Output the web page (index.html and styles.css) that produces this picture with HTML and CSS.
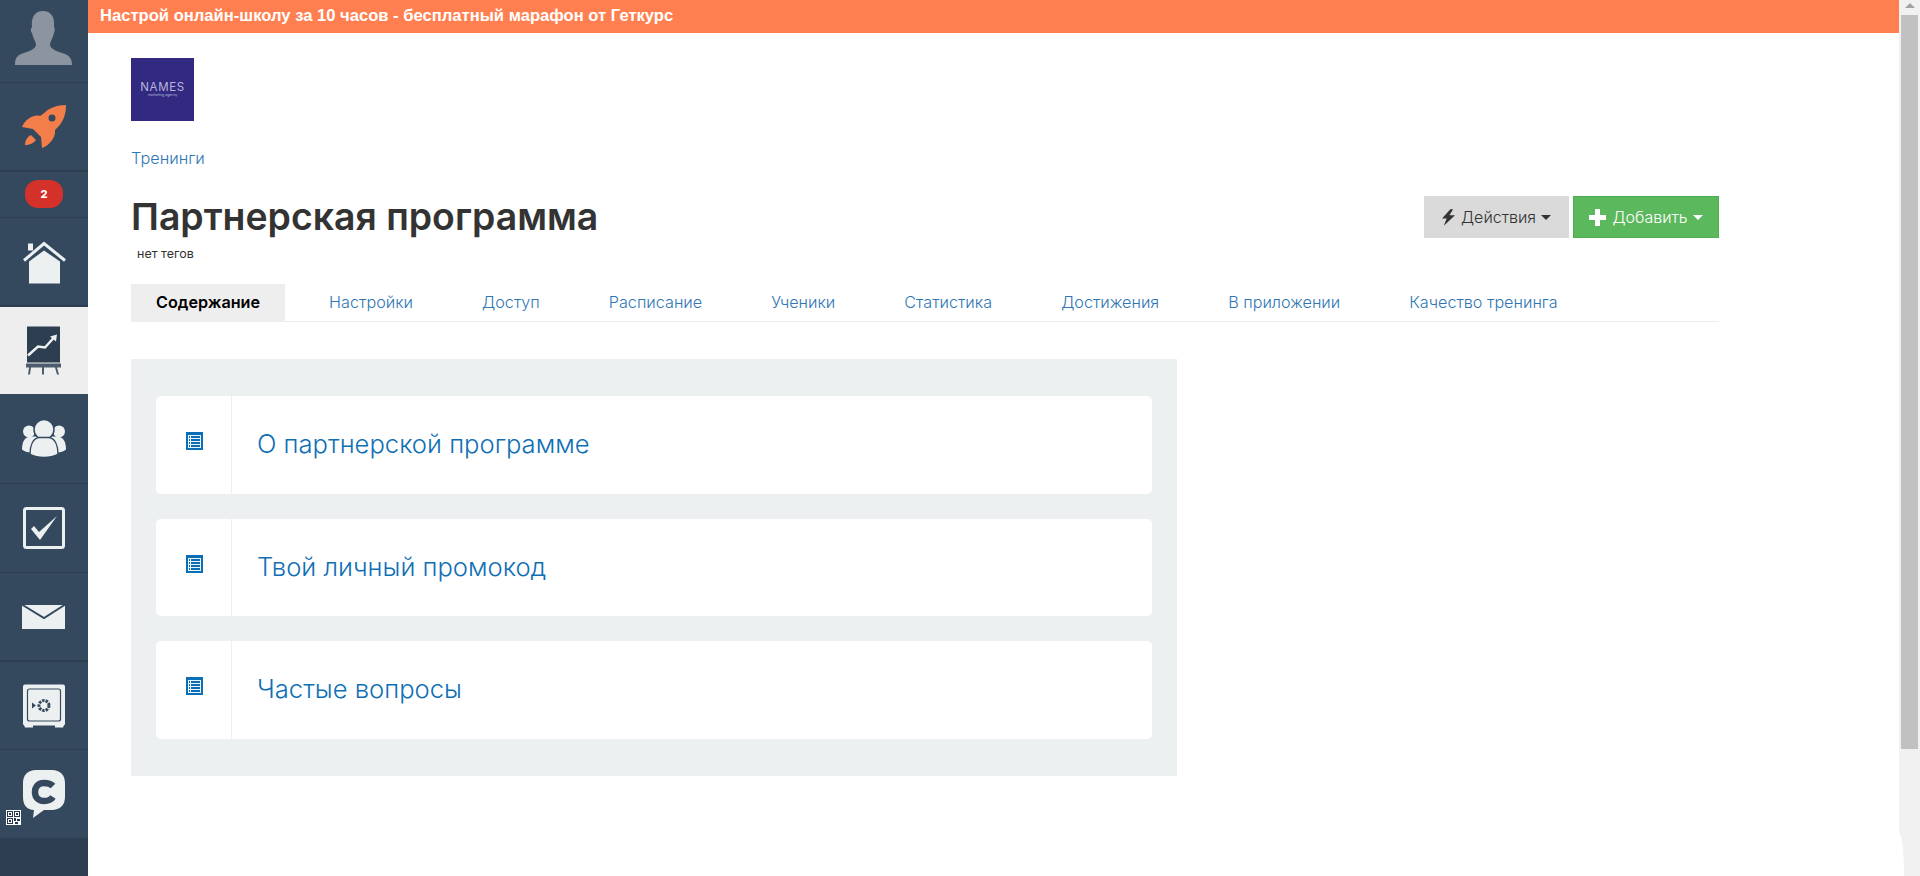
FILE: index.html
```html
<!DOCTYPE html>
<html lang="ru">
<head>
  <meta charset="UTF-8">
  <title>Партнерская программа</title>
  <link rel="stylesheet" href="styles.css">
</head>
<body>

  <!-- Левое меню -->
  <nav class="sidebar">
    <a class="side-item h-avatar">
      <svg class="side-icon" viewBox="14 11 60 60"><path class="avatar" d="M15 65C15 58 17 55 24 53C30 51 35 49 36 45C36 42 33 38 32 33C30 31 31 28 32 27C31 17 35 11 43 11C51 11 55 17 54 27C55 28 55 31 54 33C53 38 50 42 50 45C51 49 56 51 62 53C69 55 72 58 72 65Z"/></svg>
    </a>
    <a class="side-item h-rocket">
      <svg class="side-icon" viewBox="14 97 60 60">
        <path class="rocket" d="M66 105C66 115 63 122 57 128L55 130C56 137 50 145 42 148L41 137L33 129L22 127C25 120 33 114 40 116L43 114C49 108 57 105 66 105Z"/>
        <path class="rocket" d="M31 135L36 140C34 143 29 145 25 145C25 141 27 137 31 135Z"/>
        <circle class="dark" cx="52" cy="118" r="3.5"/>
      </svg>
    </a>
    <a class="side-item h-badge"><span class="badge">2</span></a>
    <a class="side-item h-home">
      <svg class="side-icon" viewBox="14 231.5 60 60">
        <path class="light" d="M28 243H33V250H28Z"/>
        <path class="light" d="M29 261L44 250L60 261V283H29Z"/>
        <path class="line" d="M24 260L44 243L65 260"/>
      </svg>
    </a>
    <a class="side-item h-active active">
      <svg class="side-icon" viewBox="14 320.5 60 60">
        <path class="board" d="M27 326H60V362H27Z"/>
        <path class="stand" d="M26 363H61V367H26ZM29 367H31L30 374H28ZM42 367H44V374H42ZM55 367H57L59 374H57Z"/>
        <path class="trend" d="M28 355L38 346L45 347L54 337"/>
        <path class="light" d="M50 336L57 334L56 341Z"/>
      </svg>
    </a>
    <a class="side-item h-users">
      <svg class="side-icon" viewBox="14 408.5 60 60">
        <circle class="light" cx="29" cy="431" r="6"/>
        <circle class="light" cx="59" cy="431" r="6"/>
        <path class="light" d="M22 449C22 441 25 436 31 436H57C63 436 66 441 66 449C64 451 60 452 58 452H30C28 452 24 451 22 449Z"/>
        <circle class="light out" cx="44" cy="429" r="10"/>
        <path class="light out" d="M30 454C30 445 33 438 39 437H49C55 438 58 445 58 454C50 458 38 458 30 454Z"/>
      </svg>
    </a>
    <a class="side-item h-tasks">
      <svg class="side-icon" viewBox="14 498 60 60">
        <rect class="frame" x="24.5" y="508.500" width="39" height="39" rx="2"/>
        <path class="light" d="M31 529L34 526L39 532L57 516L40 540Z"/>
      </svg>
    </a>
    <a class="side-item h-mail">
      <svg class="side-icon" viewBox="14 587 60 60">
        <path class="light" d="M22 605H65V629H22Z"/>
        <path class="fold" d="M21 604L44 618L66 604"/>
      </svg>
    </a>
    <a class="side-item h-safe">
      <svg class="side-icon" viewBox="14 675.500 60 60">
        <rect class="light" x="23" y="684" width="42" height="41" rx="2"/>
        <path class="light" d="M23 722H33V727H25ZM55 722H65L63 727H55Z"/>
        <rect class="thin" x="27.500" y="688.500" width="33" height="32" rx="2"/>
        <circle class="gear" cx="44" cy="705" r="5"/>
        <path class="dark" d="M32 702L36 705L32 708Z"/>
      </svg>
    </a>
    <a class="side-item h-chat">
      <svg class="side-icon" viewBox="14 764 60 60">
        <path class="light" d="M36 770H52C60 770 65 775 65 783V797C65 805 60 810 52 810H44L33 818L34 810C27 810 23 805 23 797V783C23 775 28 770 36 770Z"/>
        <path class="c-mark" d="M53 786C50 783 47 783 44 783C37 783 35 788 35 792C35 797 38 801 44 801C48 801 51 800 53 797"/>
      </svg>
    </a>
    <svg class="qr" viewBox="0 0 15 15">
      <rect width="15" height="15" fill="#fff"/>
      <path d="M1 1H7V7H1ZM8 1H14V7H8ZM1 8H7V14H1Z" fill="#26384d"/>
      <path d="M2 2H6V6H2ZM9 2H13V6H9ZM2 9H6V13H2Z" fill="#fff"/>
      <path d="M3 3H5V5H3ZM10 3H12V5H10ZM3 10H5V12H3ZM8 8H10V11H8ZM11 9H14V11H11ZM9 12H12V14H9Z" fill="#26384d"/>
    </svg>
  </nav>

  <div class="page">
    <div class="promo-bar">Настрой онлайн-школу за 10 часов - бесплатный марафон от Геткурс</div>

    <main class="content">
      <div class="logo">
        <span class="logo-name">NAMES</span>
        <span class="logo-sub">marketing agency</span>
      </div>

      <a class="crumb">Тренинги</a>

      <div class="title-row">
        <h1>Партнерская программа</h1>
        <div class="actions">
          <button class="btn btn-gray">
            <svg class="btn-icon" viewBox="0 0 14 18"><path d="M9 0L0 10H5L2 18L14 6.500H8L12 0Z" fill="#333"/></svg>
            Действия<span class="caret"></span>
          </button>
          <button class="btn btn-green">
            <svg class="btn-icon plus" viewBox="0 0 17 17"><path d="M6 0H11V6H17V11H11V17H6V11H0V6H6Z" fill="#fff"/></svg>
            Добавить<span class="caret"></span>
          </button>
        </div>
      </div>
      <div class="tags">нет тегов</div>

      <div class="tabs">
        <a class="tab active">Содержание</a>
        <a class="tab">Настройки</a>
        <a class="tab">Доступ</a>
        <a class="tab">Расписание</a>
        <a class="tab">Ученики</a>
        <a class="tab">Статистика</a>
        <a class="tab">Достижения</a>
        <a class="tab">В приложении</a>
        <a class="tab">Качество тренинга</a>
      </div>

      <div class="lessons">
        <a class="lesson">
          <span class="lesson-icon"><svg viewBox="0 0 17 18"><use href="#list-icon"/></svg></span>
          <span class="lesson-title">О партнерской программе</span>
        </a>
        <a class="lesson">
          <span class="lesson-icon"><svg viewBox="0 0 17 18"><use href="#list-icon"/></svg></span>
          <span class="lesson-title">Твой личный промокод</span>
        </a>
        <a class="lesson">
          <span class="lesson-icon"><svg viewBox="0 0 17 18"><use href="#list-icon"/></svg></span>
          <span class="lesson-title">Частые вопросы</span>
        </a>
      </div>
    </main>
  </div>

  <!-- Полоса прокрутки -->
  <div class="rail">
    <span class="rail-arrow"></span>
    <div class="rail-thumb"></div>
  </div>

  <svg class="defs">
    <symbol id="list-icon" viewBox="0 0 17 18">
      <rect width="17" height="18" fill="#0b6fb8"/>
      <rect x="2" y="3" width="13" height="13" fill="#eef5fa"/>
      <path d="M5 4H14V6H5ZM5 7H14V9H5ZM5 10H14V12H5ZM5 13H14V15H5ZM3 4H4V6H3ZM3 7H4V9H3ZM3 10H4V12H3ZM3 13H4V15H3Z" fill="#0b6fb8"/>
    </symbol>
  </svg>

</body>
</html>
```

FILE: styles.css
```css
* {
  box-sizing: border-box;
}

html, body {
  height: 100%;
}

body {
  margin: 0;
  display: flex;
  overflow: hidden;
  font-family: "Inter", "Open Sans", sans-serif;
  color: #333;
  background-color: #fff;
}

a {
  color: #2f76b5;
  text-decoration: none;
}

/* sidebar */
.sidebar {
  position: relative;
  flex: 0 0 88px;
  background-color: #2c3e50;
}

.side-item {
  display: flex;
  align-items: center;
  justify-content: center;
  background-color: #34495e;
  border-bottom: 1px solid #2c3e50;
}

.side-icon {
  width: 60px;
  height: 60px;
}

.h-avatar { height: 83px; }
.h-rocket { height: 89px; border-bottom-width: 2px; }
.h-badge { height: 46px; }
.h-home { height: 89px; border-bottom-width: 2px; }
.h-active { height: 87px; }
.h-users { height: 90px; }
.h-tasks { height: 89px; }
.h-mail { height: 89px; border-bottom-width: 2px; }
.h-safe { height: 88px; }
.h-chat { height: 88px; border-bottom: none; }

.side-item.active {
  background-color: #eee;
  border-bottom: none;
}

.avatar { fill: #8b949f; }
.rocket { fill: #f47e4a; }
.dark { fill: #34495e; }
.light { fill: #ecf0f1; }
.out { stroke: #34495e; stroke-width: 1.5; }
.line { fill: none; stroke: #ecf0f1; stroke-width: 3; }
.board { fill: #2c3e50; }
.stand { fill: #4c5c6d; }
.trend { fill: none; stroke: #ecf0f1; stroke-width: 2.5; }
.frame { fill: none; stroke: #ecf0f1; stroke-width: 3; }
.fold { fill: none; stroke: #34495e; stroke-width: 2; }
.thin { fill: none; stroke: #34495e; stroke-width: 1.2; }
.gear { fill: none; stroke: #34495e; stroke-width: 3; stroke-dasharray: 2.500 1; }
.c-mark { fill: none; stroke: #34495e; stroke-width: 6.500; }

.badge {
  width: 38px;
  height: 28px;
  margin-top: -1px;
  border-radius: 13px;
  background-color: #d5312b;
  color: #fff;
  font-size: 11px;
  font-weight: 800;
  line-height: 28px;
  text-align: center;
}

.qr {
  position: absolute;
  left: 6px;
  top: 810px;
  width: 15px;
  height: 15px;
}

/* page */
.page {
  flex: 1;
  min-width: 0;
}

.promo-bar {
  height: 33px;
  padding-left: 12px;
  background-color: #ff7f50;
  color: #fff;
  font-family: "Liberation Sans", sans-serif;
  font-size: 16.6px;
  font-weight: bold;
  line-height: 32px;
}

.content {
  width: 1631px;
  padding: 25px 0 0 43px;
}

.logo {
  display: flex;
  flex-direction: column;
  align-items: center;
  justify-content: center;
  width: 63px;
  height: 63px;
  background-color: #312a80;
  color: #b9b5dc;
}

.logo-name {
  font-size: 11.500px;
  line-height: 12px;
  letter-spacing: 0.6px;
}

.logo-sub {
  font-size: 3.500px;
  line-height: 5px;
}

.crumb {
  display: block;
  margin-top: 27px;
  font-size: 16.300px;
  font-weight: 300;
  line-height: 20px;
}

.title-row {
  display: flex;
  justify-content: space-between;
  margin-top: 28px;
}

h1 {
  margin: 0;
  font-size: 37.400px;
  font-weight: 600;
  line-height: 42px;
  color: #333;
}

.actions {
  display: flex;
  gap: 4px;
}

.btn {
  display: flex;
  align-items: center;
  justify-content: center;
  gap: 6px;
  height: 42px;
  border: 1px solid transparent;
  font-family: inherit;
  font-size: 16px;
  font-weight: 300;
  cursor: pointer;
}

.btn-gray {
  width: 145px;
  background-color: #dadada;
  color: #333;
}

.btn-green {
  width: 146px;
  background-color: #5cb85c;
  border-color: #4cae4c;
  color: #fff;
}

.btn-icon {
  width: 13px;
  height: 17px;
}

.btn-icon.plus {
  width: 17px;
}

.caret {
  width: 0;
  height: 0;
  margin-left: -1px;
  border-top: 5px solid currentColor;
  border-left: 5px solid transparent;
  border-right: 5px solid transparent;
}

.tags {
  margin-top: 8px;
  padding-left: 6px;
  font-size: 12.500px;
  line-height: 16px;
}

.tabs {
  display: flex;
  gap: 19px;
  margin-top: 22px;
  border-bottom: 1px solid #eee;
}

.tab {
  padding: 0 25px;
  font-size: 16.200px;
  font-weight: 300;
  line-height: 37px;
}

.tab.active {
  background-color: #eee;
  color: #000;
  font-weight: 600;
  font-size: 16.200px;
}

.lessons {
  display: flex;
  flex-direction: column;
  gap: 25px;
  width: 1046px;
  margin-top: 37px;
  padding: 37px 25px;
  background-color: #ecf0f1;
}

.lesson {
  display: flex;
  height: 97.500px;
  border-radius: 5px;
  background-color: #fff;
}

.lesson-icon {
  flex: 0 0 76px;
  padding: 36px 0 0 30px;
  border-right: 1px solid #ecf0f1;
}

.lesson-icon svg {
  display: block;
  width: 17px;
  height: 18px;
}

.lesson-title {
  padding-left: 25px;
  color: #0f6fb5;
  font-size: 25.600px;
  font-weight: 300;
  line-height: 96px;
}

/* scrollbar */
.rail {
  position: relative;
  flex: 0 0 21px;
  padding: 0 2px;
  background-color: #f1f1f1;
}

.rail::after {
  content: "";
  position: absolute;
  left: 0;
  bottom: 0;
  width: 5px;
  height: 43px;
  background-color: #fff;
  border-top-right-radius: 100%;
}

.rail-arrow {
  display: block;
  width: 0;
  height: 0;
  margin: 3px auto 0;
  border-bottom: 5px solid #a3a3a3;
  border-left: 5px solid transparent;
  border-right: 5px solid transparent;
}

.rail-thumb {
  height: 734px;
  margin-top: 7px;
  background-color: #c1c1c1;
}

.defs {
  position: absolute;
  width: 0;
  height: 0;
}
```
